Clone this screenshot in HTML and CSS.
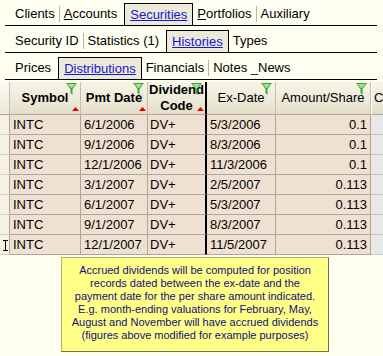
FILE: index.html
```html
<!DOCTYPE html>
<html lang="en">
<head>
<meta charset="UTF-8">
<title>Securities - Histories - Distributions</title>
<link rel="stylesheet" href="styles.css">
</head>
<body>
  <!-- main tab strip -->
  <div class="tabs r1">
    <span class="tab">Clients</span><span class="sep"></span>
    <span class="tab"><u>A</u>ccounts</span>
    <span class="tab active"><a href="#">Securities</a></span>
    <span class="tab"><u>P</u>ortfolios</span><span class="sep"></span>
    <span class="tab">Auxiliary</span>
  </div>
  <div class="tabs r2">
    <span class="tab">Security ID</span><span class="sep"></span>
    <span class="tab">Statistics (1)</span>
    <span class="tab active"><a href="#">Histories</a></span>
    <span class="tab">Types</span>
  </div>
  <div class="tabs r3">
    <span class="tab">Prices</span>
    <span class="tab active"><a href="#">Distributions</a></span>
    <span class="tab">Financials</span><span class="sep"></span>
    <span class="tab">Notes _News</span>
  </div>

  <!-- distributions grid -->
  <table class="grid">
    <colgroup>
      <col style="width:10px"><col style="width:71px"><col style="width:67px"><col style="width:59px">
      <col style="width:69px"><col style="width:95px"><col style="width:12px">
    </colgroup>
    <thead>
      <tr>
        <th class="gut"></th>
        <th class="b">Symbol<svg class="funnel" viewBox="0 0 11 12"><path d="M0 0H11L6.5 6V12L4.5 10V6Z" fill="#3da534"/><path d="M1.5 1H9.5L6 5H5Z" fill="#9fe58a"/></svg><svg class="sort" viewBox="0 0 7 4"><path d="M0 4L3.5 0L7 4Z"/></svg></th>
        <th class="b">Pmt Date<svg class="funnel" viewBox="0 0 11 12"><path d="M0 0H11L6.5 6V12L4.5 10V6Z" fill="#3da534"/><path d="M1.5 1H9.5L6 5H5Z" fill="#9fe58a"/></svg><svg class="sort" viewBox="0 0 7 4"><path d="M0 4L3.5 0L7 4Z"/></svg></th>
        <th class="b code">Dividend<br>Code<svg class="funnel" viewBox="0 0 11 12"><path d="M0 0H11L6.5 6V12L4.5 10V6Z" fill="#3da534"/><path d="M1.5 1H9.5L6 5H5Z" fill="#9fe58a"/></svg><svg class="sort" viewBox="0 0 7 4"><path d="M0 4L3.5 0L7 4Z"/></svg></th>
        <th>Ex-Date<svg class="funnel" viewBox="0 0 11 12"><path d="M0 0H11L6.5 6V12L4.5 10V6Z" fill="#3da534"/><path d="M1.5 1H9.5L6 5H5Z" fill="#9fe58a"/></svg></th>
        <th>Amount/Share<svg class="funnel" viewBox="0 0 11 12"><path d="M0 0H11L6.5 6V12L4.5 10V6Z" fill="#3da534"/><path d="M1.5 1H9.5L6 5H5Z" fill="#9fe58a"/></svg></th>
        <th class="more">C</th>
      </tr>
    </thead>
    <tbody>
      <tr><td class="gut"></td><td>INTC</td><td>6/1/2006</td><td class="code">DV+</td><td>5/3/2006</td><td class="num">0.1</td><td class="more"></td></tr>
      <tr><td class="gut"></td><td>INTC</td><td>9/1/2006</td><td class="code">DV+</td><td>8/3/2006</td><td class="num">0.1</td><td class="more"></td></tr>
      <tr><td class="gut"></td><td>INTC</td><td>12/1/2006</td><td class="code">DV+</td><td>11/3/2006</td><td class="num">0.1</td><td class="more"></td></tr>
      <tr><td class="gut"></td><td>INTC</td><td>3/1/2007</td><td class="code">DV+</td><td>2/5/2007</td><td class="num">0.113</td><td class="more"></td></tr>
      <tr><td class="gut"></td><td>INTC</td><td>6/1/2007</td><td class="code">DV+</td><td>5/3/2007</td><td class="num">0.113</td><td class="more"></td></tr>
      <tr><td class="gut"></td><td>INTC</td><td>9/1/2007</td><td class="code">DV+</td><td>8/3/2007</td><td class="num">0.113</td><td class="more"></td></tr>
      <tr><td class="gut"><svg class="ibeam" viewBox="0 0 5 11"><path d="M0 0.5H5M0 10.5H5M2.5 0.5V10.5" stroke="#000" fill="none"/></svg></td><td>INTC</td><td>12/1/2007</td><td class="code">DV+</td><td>11/5/2007</td><td class="num">0.113</td><td class="more"></td></tr>
    </tbody>
  </table>

  <div class="note">
    Accrued dividends will be computed for position<br>
    records dated between the ex-date and the<br>
    payment date for the per share amount indicated.<br>
    E.g. month-ending valuations for February, May,<br>
    August and November will have accrued dividends<br>
    (figures above modified for example purposes)
  </div>
</body>
</html>
```

FILE: styles.css
```css
body {
  margin: 0;
  background-color: #fefef1; /* cream window background */
  font-family: "Liberation Sans", Arial, sans-serif;
  font-size: 13px;
  color: #000;
  overflow: hidden;
}

/* tab strips */
.tabs {
  display: flex;
  align-items: flex-end;
  margin: 0 6px 0 5px;
  padding-left: 6px;
  border-bottom: 1px solid #000;
}

.r1 { height: 25px; }
.r2 { height: 26px; }
.r3 { height: 26px; }

.tab {
  height: 22px;
  line-height: 21px;
  padding: 0 4px;
  white-space: nowrap;
}

.sep {
  width: 1px;
  height: 16px;
  margin-bottom: 3px;
  background-color: #b8b5a4;
}

.tab.active {
  height: 21px;
  margin-left: 3px;
  padding: 0 5px;
  background-color: #ece9d8;
  border: 1px solid #000;
  border-bottom: none;
}

.tab.active a {
  color: #1515d6;
}

/* grid */
.grid {
  margin-top: 2px;
  width: 383px;
  table-layout: fixed;
  border-collapse: separate;
  border-spacing: 0;
}

.grid th {
  position: relative;
  height: 32px;
  padding: 0;
  font-weight: normal;
  line-height: 16px;
  text-align: center;
  white-space: nowrap;
  background: linear-gradient(#f6f4e8, #ebe7d4 70%, #e2ddc6);
  border-right: 1px solid #c4c0ac;
  border-bottom: 1px solid #aca899;
}

.grid th.b {
  font-weight: bold;
}

.grid th.gut {
  background: linear-gradient(#fbfaf2, #ecead9);
}

.grid th.code,
.grid td.code {
  border-right: 2px solid #000;
}

.grid th.more {
  overflow: hidden;
  text-align: left;
  padding-left: 2px;
  border-right: none;
  border-left: 1px solid #fff;
}

.grid td {
  height: 19px;
  padding: 0 0 0 3px;
  white-space: nowrap;
  overflow: hidden;
  background-color: #efe0d1;
  border-right: 1px solid #aca899;
  border-bottom: 1px solid #aca899;
}

.grid td.code {
  padding-left: 2px;
}

.grid td.num {
  text-align: right;
  padding: 0 3px 0 0;
}

.grid td.gut {
  position: relative;
  padding: 0;
  background-color: #f6f1e2;
  border-right: 1px solid #aca899;
  border-bottom: 1px solid #d8d3c0;
}

.grid td.more {
  background-color: #e8e8e8;
  border-right: none;
  border-bottom: 1px solid #c8c8c8;
}

.funnel {
  position: absolute;
  top: 1px;
  right: 3px;
  width: 11px;
  height: 12px;
}

.sort {
  position: absolute;
  bottom: 3px;
  right: 1px;
  width: 7px;
  height: 4px;
  fill: #e60000;
}

.ibeam {
  position: absolute;
  left: 3px;
  top: 5px;
  width: 5px;
  height: 11px;
}

/* yellow hint box */
.note {
  width: 266px;
  margin: 2px 0 0 61px;
  padding: 6px 0 9px;
  background-color: #ffff88;
  border: 1px solid #b0b070;
  border-right-color: #707040;
  border-bottom-color: #707040;
  color: #10107a;
  font-size: 11px;
  line-height: 13px;
  text-align: center;
}
```
